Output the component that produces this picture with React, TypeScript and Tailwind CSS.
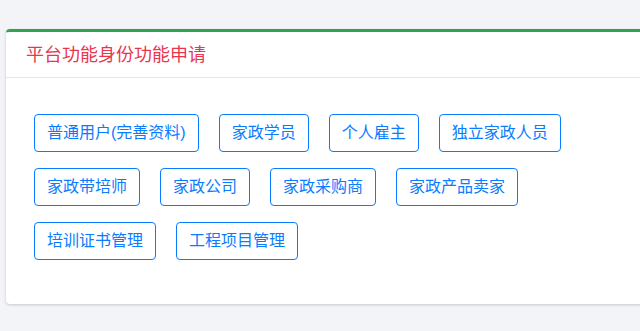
const ROLES = [
  ['普通用户(完善资料)', '家政学员', '个人雇主', '独立家政人员'],
  ['家政带培师', '家政公司', '家政采购商', '家政产品卖家'],
  ['培训证书管理', '工程项目管理'],
];

export default function App() {
  return (
    <div
      className="w-[640px] h-[331px] overflow-hidden bg-[#f3f4f8] pl-[6px] pt-[29px]"
      style={{ fontFamily: '"Liberation Sans", "Noto Sans CJK SC", sans-serif' }}
    >
      <div className="w-[680px] bg-white rounded-[4px] border-t-[3px] border-[#2ea44f] shadow-[0_1px_3px_rgba(0,0,0,0.18)]">
        <div className="h-[46px] flex items-center px-5 border-b border-[#e3e5e8]">
          <span className="text-[18px] leading-none text-[#e8364c]">平台功能身份功能申请</span>
        </div>
        <div className="pl-[28px] pt-[36px] pb-[44px] flex flex-col gap-4">
          {ROLES.map((row, i) => (
            <div key={i} className="flex gap-x-5">
              {row.map((r) => (
                <button
                  key={r}
                  className="h-[38px] px-3 border border-[#0a7cff] rounded-[4px] text-[16px] leading-6 text-[#0a7cff] bg-white"
                >
                  {r}
                </button>
              ))}
            </div>
          ))}
        </div>
      </div>
    </div>
  );
}
